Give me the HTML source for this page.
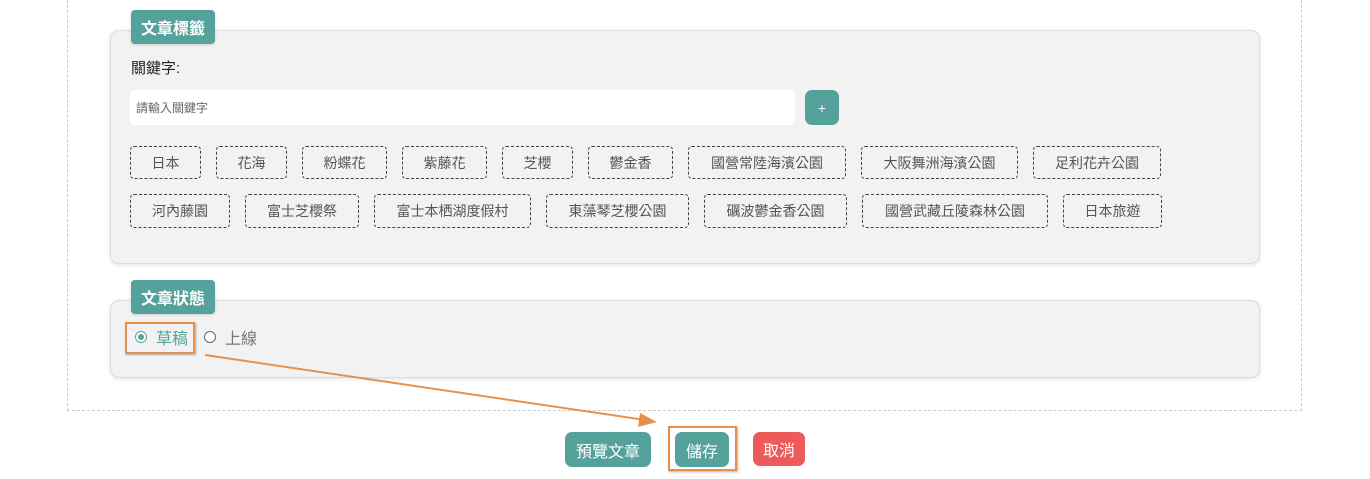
<!DOCTYPE html>
<html><head><meta charset="utf-8"><style>
*{box-sizing:border-box;margin:0;padding:0}
body{width:1370px;height:479px;background:#fff;position:relative;overflow:hidden;font-family:"Liberation Sans","Noto Sans CJK TC",sans-serif}
.a{position:absolute}
.outer{left:67px;top:-10px;width:1235px;height:421px;border:1px dashed #ccc;border-top:none}
.panel{background:#f2f2f2;border:1px solid #ddd;border-radius:9px;box-shadow:0 1px 4px rgba(0,0,0,.12)}
.tab{background:#55a19b;color:#fff;font-weight:bold;font-size:16px;border-radius:4px;display:flex;align-items:center;justify-content:center;box-shadow:0 1px 3px rgba(0,0,0,.15)}
.tag{border:1px dashed #444;border-radius:4px;font-size:14px;color:#555;display:flex;align-items:center;justify-content:center}
.btn{color:#fff;font-size:16px;border-radius:7px;display:flex;align-items:center;justify-content:center}
</style></head><body>
<div class="a outer"></div>
<div class="a panel" style="left:110px;top:30px;width:1150px;height:234px"></div>
<div class="a tab" style="left:131px;top:10px;width:84px;height:34px">文章標籤</div>
<div class="a" style="left:131px;top:57px;font-size:15px;color:#222">關鍵字:</div>
<div class="a" style="left:130px;top:90px;width:665px;height:35px;background:#fff;border-radius:5px;font-size:12px;color:#666;padding:9px 6px">請輸入關鍵字</div>
<div class="a btn" style="left:805px;top:90px;width:34px;height:35px;background:#55a19b;font-size:14px">+</div>
<div class="a tag" style="left:130px;top:146px;width:71px;height:33px">日本</div>
<div class="a tag" style="left:216px;top:146px;width:71px;height:33px">花海</div>
<div class="a tag" style="left:302px;top:146px;width:85px;height:33px">粉蝶花</div>
<div class="a tag" style="left:402px;top:146px;width:85px;height:33px">紫藤花</div>
<div class="a tag" style="left:502px;top:146px;width:71px;height:33px">芝櫻</div>
<div class="a tag" style="left:588px;top:146px;width:85px;height:33px">鬱金香</div>
<div class="a tag" style="left:688px;top:146px;width:158px;height:33px">國營常陸海濱公園</div>
<div class="a tag" style="left:861px;top:146px;width:157px;height:33px">大阪舞洲海濱公園</div>
<div class="a tag" style="left:1033px;top:146px;width:128px;height:33px">足利花卉公園</div>
<div class="a tag" style="left:130px;top:194px;width:100px;height:34px">河內藤園</div>
<div class="a tag" style="left:245px;top:194px;width:114px;height:34px">富士芝櫻祭</div>
<div class="a tag" style="left:374px;top:194px;width:157px;height:34px">富士本栖湖度假村</div>
<div class="a tag" style="left:546px;top:194px;width:143px;height:34px">東藻琴芝櫻公園</div>
<div class="a tag" style="left:704px;top:194px;width:143px;height:34px">礪波鬱金香公園</div>
<div class="a tag" style="left:862px;top:194px;width:186px;height:34px">國營武藏丘陵森林公園</div>
<div class="a tag" style="left:1063px;top:194px;width:99px;height:34px">日本旅遊</div>
<div class="a panel" style="left:110px;top:300px;width:1150px;height:78px"></div>
<div class="a tab" style="left:131px;top:280px;width:84px;height:34px">文章狀態</div>
<div class="a" style="left:125px;top:322px;width:70px;height:32px;border:2px solid #e8904a;box-shadow:1px 1px 2px rgba(0,0,0,.3)"></div>
<div class="a" style="left:135px;top:331px;width:12px;height:12px;border:1px solid #55a19b;border-radius:50%;background:#fff"><div style="margin:2px;width:6px;height:6px;border-radius:50%;background:#55a19b"></div></div>
<div class="a" style="left:156px;top:325px;font-size:16px;color:#55a19b">草稿</div>
<div class="a" style="left:204px;top:331px;width:12px;height:12px;border:1px solid #666;border-radius:50%;background:#fff"></div>
<div class="a" style="left:225px;top:325px;font-size:16px;color:#777">上線</div>
<svg class="a" style="left:0;top:0" width="1370" height="479"><line x1="205" y1="355" x2="645" y2="420" stroke="#e8904a" stroke-width="2"/><polygon points="657,422 640,413 638,427" fill="#e8904a"/></svg>
<div class="a btn" style="left:565px;top:432px;width:86px;height:35px;background:#55a19b">預覽文章</div>
<div class="a" style="left:668px;top:426px;width:69px;height:45px;border:2px solid #e8904a;box-shadow:1px 1px 2px rgba(0,0,0,.3)"></div>
<div class="a btn" style="left:675px;top:432px;width:54px;height:35px;background:#55a19b">儲存</div>
<div class="a btn" style="left:753px;top:432px;width:52px;height:34px;background:#ee5a5a">取消</div>
</body></html>
